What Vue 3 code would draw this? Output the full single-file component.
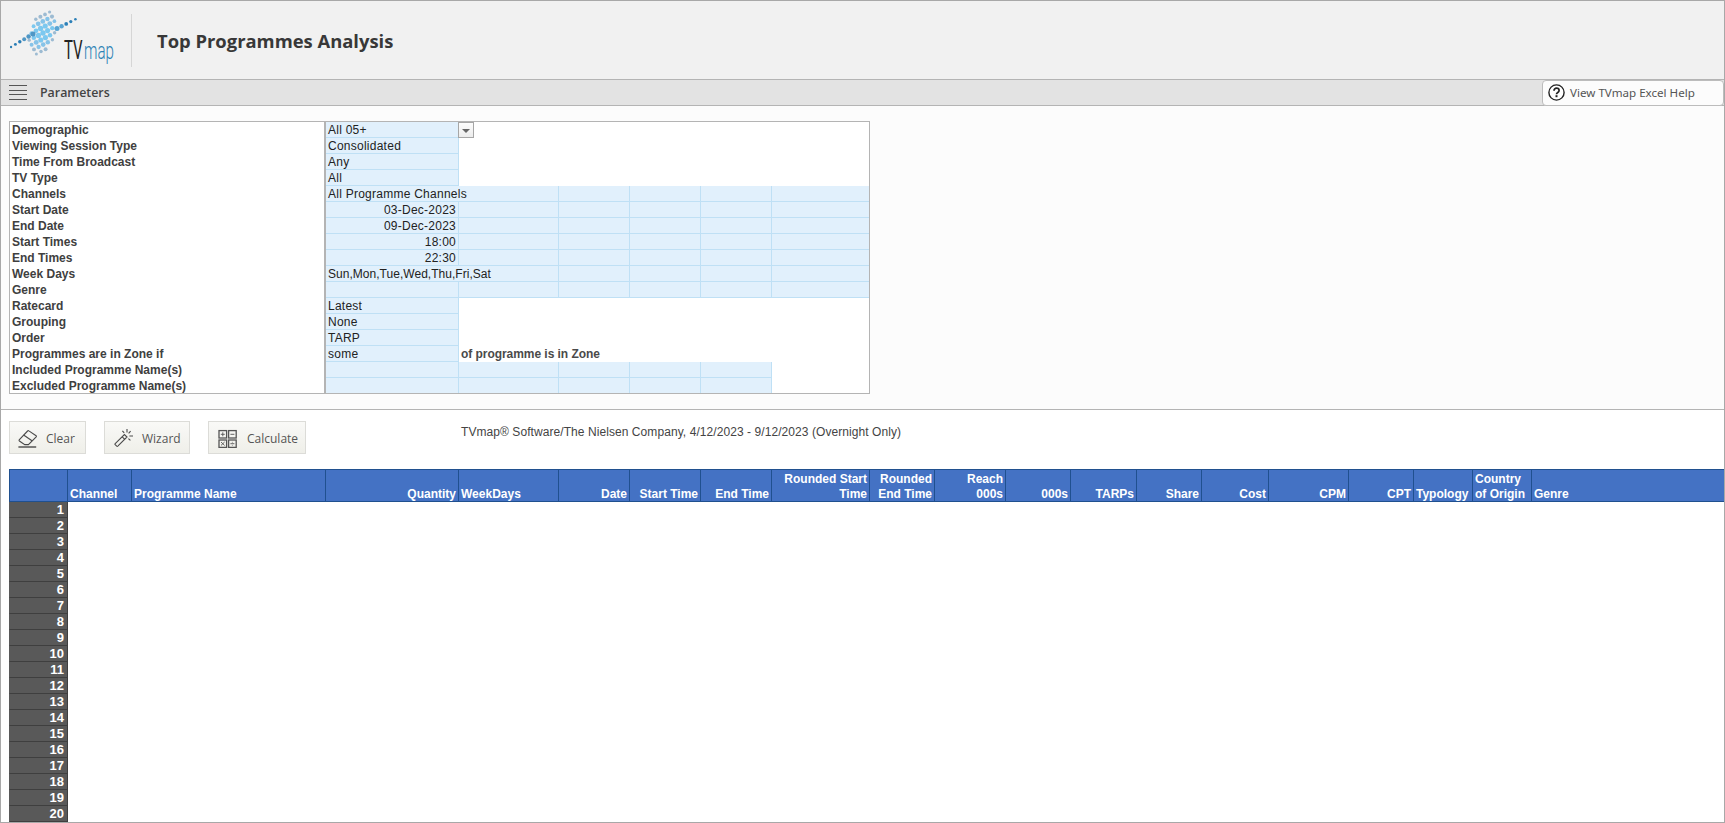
<template>
  <div class="frame">
    <header class="top">
      <svg class="logo" width="110" height="58" viewBox="0 0 110 58">
        <circle
          v-for="(d, i) in logoDots"
          :key="i"
          :cx="d.x"
          :cy="d.y"
          :r="d.r"
          :fill="d.fill"
        />
        <text class="logo-tv" transform="translate(54 49.3) scale(0.6 1)">TV</text>
        <text class="logo-map" transform="translate(74 49.3) scale(0.63 1)">map</text>
      </svg>
      <div class="divider"></div>
      <h1 class="title">Top Programmes Analysis</h1>
    </header>

    <div class="bar">
      <div class="burger"><span></span><span></span><span></span><span></span></div>
      <span class="bar-label">Parameters</span>
      <button class="help">
        <svg width="17" height="17" viewBox="0 0 17 17">
          <circle cx="8.5" cy="8.5" r="7.6" fill="#fff" stroke="#222" stroke-width="1.4" />
          <path d="M6 6.7c0-1.6 1.1-2.5 2.5-2.5s2.6.9 2.6 2.3c0 2-2.6 2-2.6 3.8" fill="none" stroke="#222" stroke-width="1.7" />
          <rect x="7.5" y="11.2" width="2" height="2" fill="#222" />
        </svg>
        <span>View TVmap Excel Help</span>
      </button>
    </div>

    <section class="params">
      <div class="param-box">
        <table class="param-table">
          <colgroup>
            <col style="width: 316px" />
            <col style="width: 133px" />
            <col style="width: 100px" />
            <col style="width: 71px" />
            <col style="width: 71px" />
            <col style="width: 71px" />
            <col style="width: 97px" />
          </colgroup>
          <tbody>
            <tr v-for="row in paramRows" :key="row.label">
              <td class="p-label">{{ row.label }}</td>
              <template v-if="row.kind === 'single'">
                <td class="p-val">{{ row.value }}</td>
                <td colspan="5" class="p-blank">
                  <span v-if="row.dropdown" class="drop"><i></i></span>
                  <span v-if="row.note" class="p-note">{{ row.note }}</span>
                </td>
              </template>
              <template v-else-if="row.kind === 'wide'">
                <td class="p-val" :class="{ tight: row.tight }" colspan="2">{{ row.value }}</td>
                <td class="p-val" v-for="n in 3" :key="n"></td>
                <td class="p-val p-end"></td>
              </template>
              <template v-else-if="row.kind === 'full'">
                <td class="p-val" :class="{ right: row.value }">{{ row.value }}</td>
                <td class="p-val" v-for="n in 4" :key="n"></td>
                <td class="p-val p-end"></td>
              </template>
              <template v-else>
                <td class="p-val" v-for="n in 5" :key="n"></td>
                <td class="p-blank"></td>
              </template>
            </tr>
          </tbody>
        </table>
      </div>
    </section>

    <section class="actions">
      <button class="tool tool-clear">
        <svg width="20" height="20" viewBox="0 0 20 20" fill="none" stroke="#4a4a4a" stroke-width="1.1">
          <path d="M1.4 11.6 9.6 3a1 1 0 0 1 1.3-.1l7.2 4.8a.8.8 0 0 1 .1 1.2L10.4 16.6H6.8L1.4 13a1 1 0 0 1 0-1.4Z" />
          <path d="M5.6 7 14 12.8" />
          <path d="M.4 19h17.8" stroke-width="1.4" />
        </svg>
        <span>Clear</span>
      </button>
      <button class="tool tool-wizard">
        <svg width="20" height="20" viewBox="0 0 20 20" fill="none" stroke="#4a4a4a" stroke-width="1.1">
          <path d="M1.2 15.6 10.4 6.6l2.6 2.4-9.2 9.2a.8.8 0 0 1-1.1 0l-1.5-1.5a.8.8 0 0 1 0-1.1Z" />
          <path d="M8.2 8.8l2.6 2.5" />
          <path d="M13 1v3.4M16.6 3.2l-2 2.2M19 8h-3.6M16.4 12.4l-2-1.8M8.4 2.8l1.8 2" />
        </svg>
        <span>Wizard</span>
      </button>
      <button class="tool tool-calc">
        <svg width="20" height="20" viewBox="0 0 20 20" fill="none" stroke="#555" stroke-width="1.3">
          <rect x="1" y="2.6" width="7.6" height="7.4" />
          <rect x="10.6" y="2.6" width="7.6" height="7.4" />
          <rect x="1" y="12" width="7.6" height="7.4" />
          <rect x="10.6" y="12" width="7.6" height="7.4" />
          <path stroke-width="0.9" d="M2.8 6.3h4M4.8 4.3v4M12.4 6.3h4M3 14l3.6 3.4M6.6 14 3 17.4M12.4 15.7h4M14.4 13.9v.6M14.4 16.9v.6" />
        </svg>
        <span>Calculate</span>
      </button>
      <p class="info">TVmap® Software/The Nielsen Company, 4/12/2023 - 9/12/2023 (Overnight Only)</p>
    </section>

    <table class="grid">
      <colgroup>
        <col v-for="c in gridCols" :key="c.name" :style="{ width: c.w + 'px' }" />
      </colgroup>
      <thead>
        <tr>
          <th v-for="c in gridCols" :key="c.name" :class="c.align">
            <div class="head">
              <template v-if="c.lines">{{ c.lines[0] }}<br />{{ c.lines[1] }}</template>
              <template v-else>{{ c.name }}</template>
            </div>
          </th>
        </tr>
      </thead>
      <tbody>
        <tr v-for="n in 20" :key="n">
          <td class="row-num">{{ n }}</td>
          <td :colspan="gridCols.length - 1"></td>
        </tr>
      </tbody>
    </table>
  </div>
</template>

<script setup>
const paramRows = [
  { label: 'Demographic', kind: 'single', value: 'All 05+', dropdown: true },
  { label: 'Viewing Session Type', kind: 'single', value: 'Consolidated' },
  { label: 'Time From Broadcast', kind: 'single', value: 'Any' },
  { label: 'TV Type', kind: 'single', value: 'All' },
  { label: 'Channels', kind: 'wide', value: 'All Programme Channels' },
  { label: 'Start Date', kind: 'full', value: '03-Dec-2023' },
  { label: 'End Date', kind: 'full', value: '09-Dec-2023' },
  { label: 'Start Times', kind: 'full', value: '18:00' },
  { label: 'End Times', kind: 'full', value: '22:30' },
  { label: 'Week Days', kind: 'wide', value: 'Sun,Mon,Tue,Wed,Thu,Fri,Sat', tight: true },
  { label: 'Genre', kind: 'full', value: '' },
  { label: 'Ratecard', kind: 'single', value: 'Latest' },
  { label: 'Grouping', kind: 'single', value: 'None' },
  { label: 'Order', kind: 'single', value: 'TARP' },
  { label: 'Programmes are in Zone if', kind: 'single', value: 'some', note: 'of programme is in Zone' },
  { label: 'Included Programme Name(s)', kind: 'names' },
  { label: 'Excluded Programme Name(s)', kind: 'names' }
]

const gridCols = [
  { name: 'num', w: 59, lines: ['', ''] },
  { name: 'Channel', w: 64 },
  { name: 'Programme Name', w: 194 },
  { name: 'Quantity', w: 133, align: 'right' },
  { name: 'WeekDays', w: 100 },
  { name: 'Date', w: 71, align: 'right' },
  { name: 'Start Time', w: 71, align: 'right' },
  { name: 'End Time', w: 71, align: 'right' },
  { name: 'Rounded Start Time', w: 98, align: 'right', lines: ['Rounded Start', 'Time'] },
  { name: 'Rounded End Time', w: 65, align: 'right', lines: ['Rounded', 'End Time'] },
  { name: 'Reach 000s', w: 71, align: 'right', lines: ['Reach', '000s'] },
  { name: '000s', w: 65, align: 'right' },
  { name: 'TARPs', w: 66, align: 'right' },
  { name: 'Share', w: 65, align: 'right' },
  { name: 'Cost', w: 67, align: 'right' },
  { name: 'CPM', w: 80, align: 'right' },
  { name: 'CPT', w: 65, align: 'right' },
  { name: 'Typology', w: 59 },
  { name: 'Country of Origin', w: 59, lines: ['Country', 'of Origin'] },
  { name: 'Genre', w: 192 }
]

// the logo ribbon: a rotated lattice of dots clipped to an S shaped band, plus two thin tails
const buildLogo = () => {
  const dots = []
  const ux = 4.6
  const uy = -2.4
  const vx = 2.4
  const vy = 4.6
  for (let i = -10; i <= 10; i++) {
    for (let j = -10; j <= 10; j++) {
      const x = 33 + i * ux + j * vx
      const y = 23 + i * uy + j * vy
      const t = (y - 1) / 43
      if (t < 0 || t > 1) continue
      const centre = 37 - 9 * t
      const half = 6.5 + 7 * Math.sin(t * Math.PI)
      const dist = Math.abs(x - centre)
      if (dist > half) continue
      const edge = dist / half
      const end = Math.abs(t - 0.5) * 2
      const r = 2.7 - 1.2 * Math.max(edge * edge, end * end)
      const fill = end > 0.7 || edge > 0.85 ? '#9dbbd2' : end > 0.35 ? '#86c3e8' : '#7cc8ef'
      dots.push({ x, y, r, fill })
    }
  }
  for (let k = 0; k < 6; k++) {
    dots.push({
      x: 1 + k * 4.4,
      y: 37 - k * 2.6,
      r: 1.2 + k * 0.26,
      fill: k < 3 ? '#2a7db5' : '#4e96c5'
    })
  }
  for (let k = 0; k < 5; k++) {
    dots.push({
      x: 47 + k * 4.6,
      y: 18.5 - k * 2.3,
      r: 2.5 - k * 0.3,
      fill: k < 2 ? '#5aa5d3' : '#2c80b8'
    })
  }
  return dots
}
const logoDots = buildLogo()
</script>

<style>
html,
body {
  margin: 0;
  background: #fff;
  overflow: hidden;
}
</style>

<style scoped>
.frame {
  box-sizing: border-box;
  width: 1725px;
  height: 823px;
  border: 1px solid #a8a8a8;
  overflow: hidden;
  background: #fff;
  font-family: 'Liberation Sans', Arial, sans-serif;
  font-size: 12px;
}

.top {
  height: 78px;
  box-sizing: border-box;
  background: #f1f1f1;
  display: flex;
  align-items: center;
  padding-left: 9px;
}

.logo {
  flex: none;
  align-self: flex-start;
  margin-top: 9px;
}

.logo-tv {
  font-family: 'Roboto', 'Liberation Sans', sans-serif;
  font-size: 25px;
  fill: #222;
}

.logo-map {
  font-family: 'Roboto', 'Liberation Sans', sans-serif;
  font-size: 24px;
  font-weight: 300;
  fill: #2b82b5;
}

.divider {
  width: 1px;
  height: 53px;
  background: #d6d6d6;
  margin-left: 11px;
}

.title {
  margin: 0 0 0 25px;
  font-family: 'Open Sans', 'Noto Sans', sans-serif;
  font-size: 18.4px;
  font-weight: 700;
  color: #383838;
}

.bar {
  height: 27px;
  box-sizing: border-box;
  background: #e3e3e3;
  border-top: 1px solid #b4b4b4;
  border-bottom: 1px solid #b4b4b4;
  display: flex;
  align-items: center;
  padding-left: 8px;
}

.burger {
  width: 18px;
  display: flex;
  flex-direction: column;
  gap: 3.5px;
}

.burger span {
  height: 1px;
  background: #555;
}

.bar-label {
  margin-left: 13px;
  font-family: 'Open Sans', 'Noto Sans', sans-serif;
  font-size: 12.4px;
  font-weight: 600;
  color: #444;
}

.help {
  margin-left: auto;
  height: 26px;
  width: 182px;
  box-sizing: border-box;
  margin-top: -1px;
  margin-bottom: -1px;
  border: 1px solid #bcbcbc;
  border-radius: 4px;
  background: #fcfcfc;
  padding: 0 0 0 5px;
  display: flex;
  align-items: center;
  gap: 5px;
  font-family: 'Noto Sans', 'Open Sans', sans-serif;
  font-size: 11.6px;
  color: #555;
}

.params {
  height: 304px;
  box-sizing: border-box;
  background: #fcfcfc;
  border-bottom: 1px solid #b4b4b4;
  padding: 15px 0 0 8px;
}

.param-box {
  width: 861px;
  box-sizing: border-box;
  border: 1px solid #b4b4b4;
  background: #fff;
}

.param-table {
  table-layout: fixed;
  border-collapse: separate;
  border-spacing: 0;
  width: 859px;
  color: #222;
}

.param-table td {
  height: 16px;
  box-sizing: border-box;
  padding: 1px 2px 0;
  line-height: 14px;
  vertical-align: top;
  white-space: nowrap;
}

.param-table tr:last-child td {
  height: 15px;
  border-bottom: none;
}

.param-table .p-label {
  font-weight: 700;
  color: #404040;
  border-right: 2px solid #b4b4b4;
}

.param-table .p-val {
  background: #e1f0fc;
  border-right: 1px solid #bfe0f5;
  border-bottom: 1px solid #bfe0f5;
  letter-spacing: 0.25px;
}

.param-table .tight {
  letter-spacing: 0.03px;
}

.param-table .p-end {
  border-right: none;
}

.param-table .right {
  text-align: right;
}

.param-table .p-blank {
  position: relative;
  padding: 1px 0 0;
}

.p-note {
  padding-left: 2px;
  font-weight: 700;
  color: #4a4a4a;
  letter-spacing: -0.05px;
}

.drop {
  position: absolute;
  left: -1px;
  top: 0;
  width: 16px;
  height: 16px;
  box-sizing: border-box;
  border: 1px solid #a6a6a6;
  background: linear-gradient(#fdfdfd, #ececec);
}

.drop i {
  position: absolute;
  left: 3px;
  top: 6px;
  border-left: 4px solid transparent;
  border-right: 4px solid transparent;
  border-top: 4px solid #666;
}

.actions {
  height: 59px;
  box-sizing: border-box;
  padding: 11px 0 0 8px;
  display: flex;
  align-items: flex-start;
}

.tool {
  height: 33px;
  box-sizing: border-box;
  border: 1px solid #dcdcd8;
  background: linear-gradient(#f9f9f7, #efefe9);
  display: flex;
  align-items: center;
  padding: 0;
  font-family: 'Open Sans', 'Noto Sans', sans-serif;
  font-size: 12px;
  color: #555;
}

.tool span {
  margin-top: 2px;
}

.tool-clear {
  width: 77px;
  padding-left: 8px;
  gap: 8px;
}

.tool-wizard {
  width: 86px;
  margin-left: 18px;
  padding-left: 9px;
  gap: 8px;
}

.tool-calc {
  width: 98px;
  margin-left: 18px;
  padding-left: 9px;
  gap: 9px;
}

.info {
  margin: 4px 0 0 155px;
  font-size: 12px;
  color: #444;
  line-height: 14px;
  letter-spacing: 0.07px;
}

.grid {
  margin-left: 8px;
  width: 1715px;
  table-layout: fixed;
  border-collapse: separate;
  border-spacing: 0;
}

.grid th {
  height: 33px;
  box-sizing: border-box;
  background: #4472c4;
  color: #fff;
  font-weight: 700;
  font-size: 12px;
  text-align: left;
  vertical-align: bottom;
  padding: 0 2px;
  white-space: nowrap;
  border-top: 1px solid #20508f;
  border-bottom: 1px solid #20508f;
  border-right: 1px solid #20508f;
}

.grid .head {
  line-height: 15px;
  margin-bottom: -1px;
}

.grid th:first-child {
  border-left: 1px solid #20508f;
}

.grid th:last-child {
  border-right: none;
}

.grid th.right {
  text-align: right;
}

.grid td {
  height: 16px;
  box-sizing: border-box;
  padding: 0;
}

.grid .row-num {
  background: #595959;
  border-right: 1px solid #3f3f3f;
  border-bottom: 1px solid #3f3f3f;
  border-left: 1px solid #595959;
  color: #fff;
  font-weight: 700;
  font-size: 13px;
  line-height: 15px;
  text-align: right;
  padding-right: 3px;
}
</style>
